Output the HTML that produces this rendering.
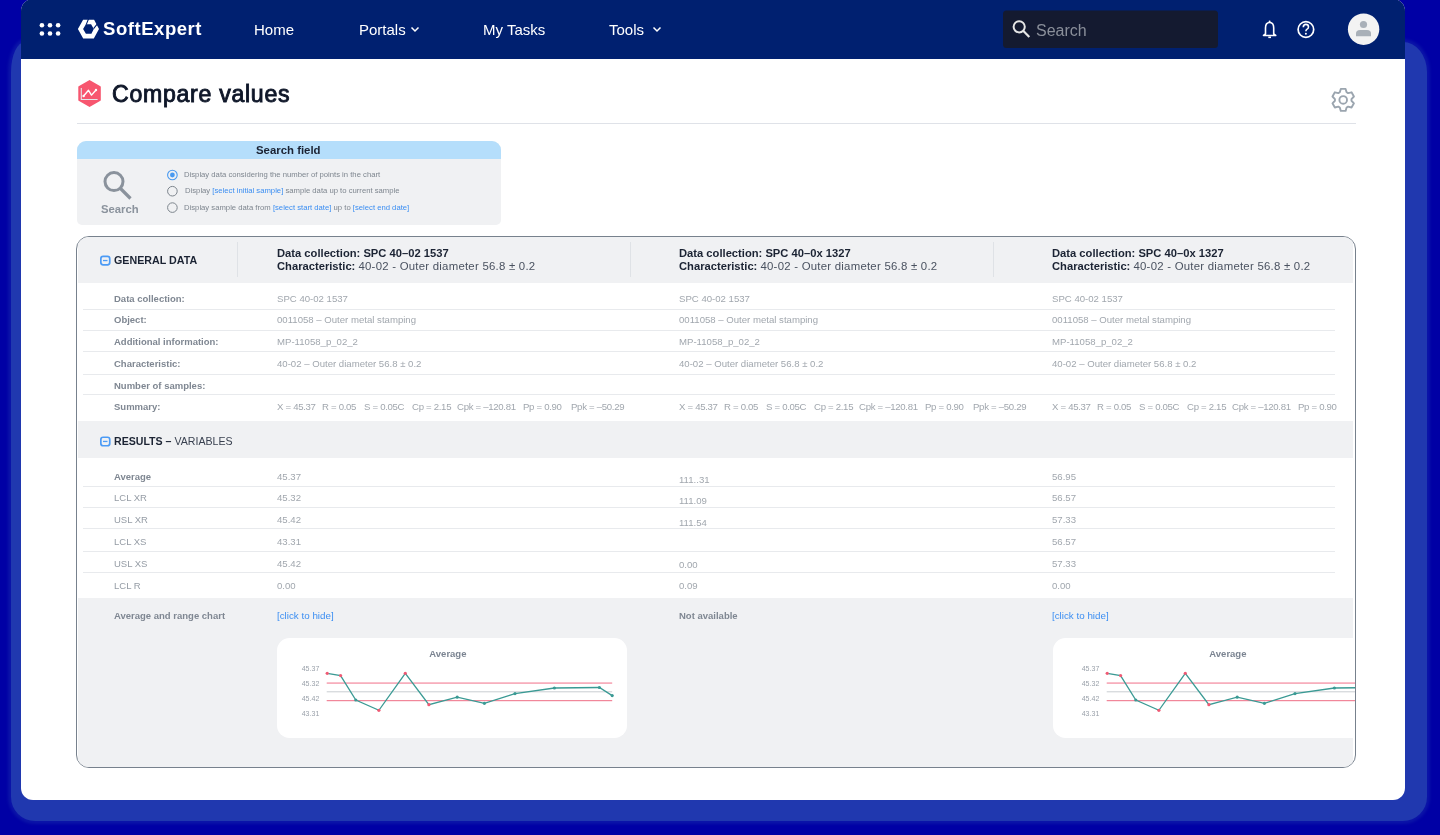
<!DOCTYPE html><html><head><meta charset="utf-8"><style>
*{margin:0;padding:0;box-sizing:border-box;-webkit-font-smoothing:antialiased}
html,body{width:1440px;height:835px;overflow:hidden;background:#0000a5;font-family:"Liberation Sans",sans-serif;position:relative}
.t{will-change:transform}
.abs{position:absolute}
#glow{position:absolute;left:11px;top:42px;width:1416px;height:779px;background:#2038af;border-radius:14px 24px 24px 24px / 30px 30px 24px 24px;box-shadow:0 0 3px 3px rgba(32,56,175,.35)}
#win{position:absolute;left:21px;top:-1px;width:1384px;height:801px;background:#fff;border-radius:12px}
#hdr{position:absolute;left:21px;top:-1px;width:1384px;height:60px;background:#002070;border-radius:12px 12px 0 0}
.t{position:absolute;white-space:nowrap;line-height:1}
.nav{color:#fff;font-size:15px}
.lbl{font-size:9.5px;font-weight:bold;color:#7f8792}
.lbr{font-size:9.5px;color:#959ca5}
.val{font-size:9.6px;color:#a1a7ae}
.sm{font-size:9.6px;color:#a1a7ae;letter-spacing:-0.3px}
.hd{font-size:11.2px;color:#1b2333}
.hd b{font-weight:bold}
.hd span{color:#4a5260;font-size:11.4px;letter-spacing:0.24px}
.link{font-size:9.8px;color:#3b8ef2}
</style></head><body>
<div id="glow"></div><div id="win"></div><div id="hdr"></div>
<svg class="abs" style="left:0;top:0" width="1440" height="60">
  <g fill="#fff">
    <circle cx="41.9" cy="25.25" r="2.3"/><circle cx="50" cy="25.25" r="2.3"/><circle cx="58.1" cy="25.25" r="2.3"/>
    <circle cx="41.9" cy="33.5" r="2.3"/><circle cx="50" cy="33.5" r="2.3"/><circle cx="58.1" cy="33.5" r="2.3"/>
  </g>
  <path fill="#fff" fill-rule="evenodd" d="M77.9 29.1 L83.1 19.7 L94.1 19.7 L99 29.1 L93.8 38.5 L83.2 38.5 Z M83.1 29.1 L85.9 24.2 L91.1 24.2 L93.8 29.1 L91.4 33.8 L85.9 33.8 Z"/>
  <path d="M88.6 18.8 L86.2 24.6 M97.2 24.2 L93.6 28.6" stroke="#002070" stroke-width="1.1"/>
  <path d="M411.5 27.5 L415 31 L418.5 27.5" fill="none" stroke="#fff" stroke-width="1.5"/>
  <path d="M653.5 27.5 L657 31 L660.5 27.5" fill="none" stroke="#fff" stroke-width="1.5"/>
  <rect x="1003" y="10.5" width="215" height="37.5" rx="3.5" fill="#141a30"/>
  <circle cx="1019.2" cy="26.8" r="5.6" fill="none" stroke="#e6e6e6" stroke-width="2"/>
  <path d="M1023.2 30.8 L1029.3 37" stroke="#e6e6e6" stroke-width="2.2"/>
  <path d="M1265.5 34 L1265.5 28 Q1265.5 22.5 1269.6 22.5 Q1273.7 22.5 1273.7 28 L1273.7 34 L1275.7 35.5 L1263.5 35.5 Z" fill="none" stroke="#fff" stroke-width="1.6" stroke-linejoin="round"/>
  <path d="M1268.3 37.3 L1271 37.3" stroke="#fff" stroke-width="1.6"/>
  <circle cx="1269.6" cy="21.5" r="1" fill="#fff"/>
  <circle cx="1305.9" cy="29.5" r="7.8" fill="none" stroke="#fff" stroke-width="1.7"/>
  <path d="M1303.3 27.2 Q1303.3 24.4 1305.9 24.4 Q1308.5 24.4 1308.5 27 Q1308.5 28.6 1306.8 29.4 Q1305.9 29.9 1305.9 31.3" fill="none" stroke="#fff" stroke-width="1.6"/>
  <circle cx="1305.9" cy="33.8" r="1" fill="#fff"/>
  <circle cx="1363.6" cy="29.2" r="15.7" fill="#f3f3f3"/>
  <circle cx="1363.5" cy="24.5" r="3.6" fill="#a9b0b8"/>
  <path d="M1356 36.2 L1356 33.5 Q1356 30 1360 30 L1367 30 Q1371 30 1371 33.5 L1371 36.2 Z" fill="#a9b0b8"/>
</svg>
<div class="t" style="left:103px;top:19.8px;font-size:18.5px;letter-spacing:0.55px;font-weight:bold;color:#fff">SoftExpert</div>
<div class="t nav" style="left:254px;top:22px">Home</div>
<div class="t nav" style="left:359px;top:22px">Portals</div>
<div class="t nav" style="left:483px;top:22px">My Tasks</div>
<div class="t nav" style="left:609px;top:22px">Tools</div>
<div class="t" style="left:1036px;top:22.5px;font-size:16px;color:#8a8f9a">Search</div>
<svg class="abs" style="left:0;top:60px" width="1440" height="80">
  <path d="M89.55 20.85 L100.05 27 L100.05 40 L89.55 46.15 L79.05 40 L79.05 27 Z" fill="#f7566f" stroke="#f7566f" stroke-width="1.5" stroke-linejoin="round"/>
  <path d="M81.3 28 L81.3 39.5 L97.6 39.5" fill="none" stroke="#e3e6ea" stroke-width="1.1"/>
  <path d="M83.6 36 L88.5 30.3 L91.5 35.1 L96 30" fill="none" stroke="#fff" stroke-width="1.4" stroke-linejoin="round"/>
  <circle cx="83.6" cy="36" r="1.2" fill="#fff"/><circle cx="96" cy="30" r="1.2" fill="#fff"/>
  <rect x="77" y="63" width="1279" height="1" fill="#dfe2e8"/>
</svg>
<div class="t" style="left:111.8px;top:82.5px;font-size:23.1px;letter-spacing:0.72px;-webkit-text-stroke:0.9px #0f1729;color:#0f1729">Compare values</div>
<svg class="abs" style="left:0;top:0" width="1440" height="130"><polygon fill="none" stroke="#9ba5af" stroke-width="1.9" stroke-linejoin="round" points="1339.80,92.30 1340.80,88.90 1345.60,88.90 1346.60,92.30 1348.08,93.16 1351.53,92.32 1353.93,96.48 1351.48,99.04 1351.48,100.76 1353.93,103.32 1351.53,107.48 1348.08,106.64 1346.60,107.50 1345.60,110.90 1340.80,110.90 1339.80,107.50 1338.32,106.64 1334.87,107.48 1332.47,103.32 1334.92,100.76 1334.92,99.04 1332.47,96.48 1334.87,92.32 1338.32,93.16"/><circle cx="1343.2" cy="99.9" r="3.8" fill="none" stroke="#9ba5af" stroke-width="1.9"/></svg>
<div class="abs" style="left:77px;top:141px;width:424px;height:84px;background:#f0f1f3;border-radius:9px 9px 5px 5px;overflow:hidden"><div style="height:18px;background:#b5defb"></div></div>
<div class="t" style="left:256px;top:144.5px;font-size:11.4px;font-weight:bold;color:#1b2333">Search field</div>
<svg class="abs" style="left:0;top:140px" width="520" height="90">
  <circle cx="114" cy="41.6" r="9" fill="none" stroke="#8a929c" stroke-width="3"/>
  <path d="M120.5 48.5 L130.5 58.5" stroke="#8a929c" stroke-width="3.2"/>
  <circle cx="172.4" cy="35" r="4.8" fill="none" stroke="#4a9af0" stroke-width="1.1"/>
  <circle cx="172.4" cy="35" r="2.4" fill="#4a9af0"/>
  <circle cx="172.4" cy="51.2" r="4.8" fill="none" stroke="#7c848c" stroke-width="1"/>
  <circle cx="172.4" cy="67.6" r="4.8" fill="none" stroke="#7c848c" stroke-width="1"/>
</svg>
<div class="t" style="left:101px;top:203.8px;font-size:11.3px;font-weight:bold;color:#8b939d">Search</div>
<div class="t" style="left:184px;top:171.3px;font-size:7.7px;color:#7e868f">Display data considering the number of points in the chart</div>
<div class="t" style="left:185px;top:187.3px;font-size:7.7px;color:#7e868f">Display <span style="color:#3b8ef2">[select initial sample]</span> sample data up to current sample</div>
<div class="t" style="left:184px;top:203.5px;font-size:7.7px;color:#7e868f">Display sample data from <span style="color:#3b8ef2">[select start date]</span> up to <span style="color:#3b8ef2">[select end date]</span></div>
<div class="abs" style="left:76.2px;top:236px;width:1279.8px;height:532.2px;border:1.5px solid #77818d;border-radius:13px;background:#fff;overflow:hidden">
<div class="abs" style="left:1.30px;top:-1.50px;width:1274.5px;height:47.5px;background:#f0f1f3;"></div>
<div class="abs" style="left:1.30px;top:183.70px;width:1274.5px;height:37.3px;background:#f0f1f3;"></div>
<div class="abs" style="left:1.30px;top:360.50px;width:1274.5px;height:172px;background:#f0f1f3;"></div>
<div class="abs" style="left:160.30px;top:4.50px;width:1px;height:35px;background:#dfe2e6;"></div>
<div class="abs" style="left:553.30px;top:4.50px;width:1px;height:35px;background:#dfe2e6;"></div>
<div class="abs" style="left:916.30px;top:4.50px;width:1px;height:35px;background:#dfe2e6;"></div>
<div class="abs" style="left:6.30px;top:71.50px;width:1252px;height:1px;background:#e8eaed;"></div>
<div class="abs" style="left:6.30px;top:93.00px;width:1252px;height:1px;background:#e8eaed;"></div>
<div class="abs" style="left:6.30px;top:114.00px;width:1252px;height:1px;background:#e8eaed;"></div>
<div class="abs" style="left:6.30px;top:136.50px;width:1252px;height:1px;background:#e8eaed;"></div>
<div class="abs" style="left:6.30px;top:157.00px;width:1252px;height:1px;background:#e8eaed;"></div>
<div class="abs" style="left:6.30px;top:249.00px;width:1252px;height:1px;background:#e8eaed;"></div>
<div class="abs" style="left:6.30px;top:270.00px;width:1252px;height:1px;background:#e8eaed;"></div>
<div class="abs" style="left:6.30px;top:291.00px;width:1252px;height:1px;background:#e8eaed;"></div>
<div class="abs" style="left:6.30px;top:313.50px;width:1252px;height:1px;background:#e8eaed;"></div>
<div class="abs" style="left:6.30px;top:334.50px;width:1252px;height:1px;background:#e8eaed;"></div>
<svg class="abs" style="left:-77.70px;top:-237.50px" width="200" height="500"><rect x="100.85" y="256.35" width="8.9" height="8.5" rx="2.3" fill="none" stroke="#4c9bf5" stroke-width="1.7"/><rect x="103" y="259.90" width="4.5" height="1.3" fill="#4c9bf5"/></svg>
<svg class="abs" style="left:-77.70px;top:-237.50px" width="200" height="500"><rect x="100.85" y="437.25" width="8.9" height="8.5" rx="2.3" fill="none" stroke="#4c9bf5" stroke-width="1.7"/><rect x="103" y="440.80" width="4.5" height="1.3" fill="#4c9bf5"/></svg>
<div class="t " style="left:37.10px;top:17.50px;font-size:10.7px;font-weight:bold;color:#1b2333">GENERAL DATA</div>
<div class="t " style="left:37.10px;top:198.50px;font-size:10.6px;color:#1b2333"><b>RESULTS –</b> <span style="color:#394150">VARIABLES</span></div>
<div class="t hd" style="left:199.80px;top:10.50px;"><b>Data collection: SPC 40–02 1537</b></div>
<div class="t hd" style="left:199.80px;top:24.00px;"><b>Characteristic:</b> <span>40-02 - Outer diameter 56.8 ± 0.2</span></div>
<div class="t hd" style="left:601.80px;top:10.50px;"><b>Data collection: SPC 40–0x 1327</b></div>
<div class="t hd" style="left:601.80px;top:24.00px;"><b>Characteristic:</b> <span>40-02 - Outer diameter 56.8 ± 0.2</span></div>
<div class="t hd" style="left:974.80px;top:10.50px;"><b>Data collection: SPC 40–0x 1327</b></div>
<div class="t hd" style="left:974.80px;top:24.00px;"><b>Characteristic:</b> <span>40-02 - Outer diameter 56.8 ± 0.2</span></div>
<div class="t lbl" style="left:37.30px;top:56.50px;">Data collection:</div>
<div class="t val" style="left:199.80px;top:56.50px;">SPC 40-02 1537</div>
<div class="t val" style="left:601.80px;top:56.50px;">SPC 40-02 1537</div>
<div class="t val" style="left:974.80px;top:56.50px;">SPC 40-02 1537</div>
<div class="t lbl" style="left:37.30px;top:78.25px;">Object:</div>
<div class="t val" style="left:199.80px;top:78.25px;">0011058 – Outer metal stamping</div>
<div class="t val" style="left:601.80px;top:78.25px;">0011058 – Outer metal stamping</div>
<div class="t val" style="left:974.80px;top:78.25px;">0011058 – Outer metal stamping</div>
<div class="t lbl" style="left:37.30px;top:100.00px;">Additional information:</div>
<div class="t val" style="left:199.80px;top:100.00px;">MP-11058_p_02_2</div>
<div class="t val" style="left:601.80px;top:100.00px;">MP-11058_p_02_2</div>
<div class="t val" style="left:974.80px;top:100.00px;">MP-11058_p_02_2</div>
<div class="t lbl" style="left:37.30px;top:121.75px;">Characteristic:</div>
<div class="t val" style="left:199.80px;top:121.75px;">40-02 – Outer diameter 56.8 ± 0.2</div>
<div class="t val" style="left:601.80px;top:121.75px;">40-02 – Outer diameter 56.8 ± 0.2</div>
<div class="t val" style="left:974.80px;top:121.75px;">40-02 – Outer diameter 56.8 ± 0.2</div>
<div class="t lbl" style="left:37.30px;top:143.50px;">Number of samples:</div>
<div class="t val" style="left:199.80px;top:143.50px;"></div>
<div class="t val" style="left:601.80px;top:143.50px;"></div>
<div class="t val" style="left:974.80px;top:143.50px;"></div>
<div class="t lbl" style="left:37.30px;top:165.25px;">Summary:</div>
<div class="t sm" style="left:200.00px;top:165.25px;">X = 45.37</div>
<div class="t sm" style="left:245.00px;top:165.25px;">R = 0.05</div>
<div class="t sm" style="left:286.90px;top:165.25px;">S = 0.05C</div>
<div class="t sm" style="left:334.50px;top:165.25px;">Cp = 2.15</div>
<div class="t sm" style="left:379.40px;top:165.25px;">Cpk = –120.81</div>
<div class="t sm" style="left:446.30px;top:165.25px;">Pp = 0.90</div>
<div class="t sm" style="left:494.30px;top:165.25px;">Ppk = –50.29</div>
<div class="t sm" style="left:602.00px;top:165.25px;">X = 45.37</div>
<div class="t sm" style="left:647.00px;top:165.25px;">R = 0.05</div>
<div class="t sm" style="left:688.90px;top:165.25px;">S = 0.05C</div>
<div class="t sm" style="left:736.50px;top:165.25px;">Cp = 2.15</div>
<div class="t sm" style="left:781.40px;top:165.25px;">Cpk = –120.81</div>
<div class="t sm" style="left:848.30px;top:165.25px;">Pp = 0.90</div>
<div class="t sm" style="left:896.30px;top:165.25px;">Ppk = –50.29</div>
<div class="t sm" style="left:975.00px;top:165.25px;">X = 45.37</div>
<div class="t sm" style="left:1020.00px;top:165.25px;">R = 0.05</div>
<div class="t sm" style="left:1061.90px;top:165.25px;">S = 0.05C</div>
<div class="t sm" style="left:1109.50px;top:165.25px;">Cp = 2.15</div>
<div class="t sm" style="left:1154.40px;top:165.25px;">Cpk = –120.81</div>
<div class="t sm" style="left:1221.30px;top:165.25px;">Pp = 0.90</div>
<div class="t lbl" style="left:37.30px;top:234.50px;">Average</div>
<div class="t val" style="left:199.80px;top:234.50px;">45.37</div>
<div class="t val" style="left:601.80px;top:238.20px;">111..31</div>
<div class="t val" style="left:974.80px;top:234.50px;">56.95</div>
<div class="t lbr" style="left:37.30px;top:256.30px;">LCL XR</div>
<div class="t val" style="left:199.80px;top:256.30px;">45.32</div>
<div class="t val" style="left:601.80px;top:259.40px;">111.09</div>
<div class="t val" style="left:974.80px;top:256.30px;">56.57</div>
<div class="t lbr" style="left:37.30px;top:278.10px;">USL XR</div>
<div class="t val" style="left:199.80px;top:278.10px;">45.42</div>
<div class="t val" style="left:601.80px;top:280.60px;">111.54</div>
<div class="t val" style="left:974.80px;top:278.10px;">57.33</div>
<div class="t lbr" style="left:37.30px;top:299.90px;">LCL XS</div>
<div class="t val" style="left:199.80px;top:299.90px;">43.31</div>
<div class="t val" style="left:601.80px;top:301.80px;"></div>
<div class="t val" style="left:974.80px;top:299.90px;">56.57</div>
<div class="t lbr" style="left:37.30px;top:321.70px;">USL XS</div>
<div class="t val" style="left:199.80px;top:321.70px;">45.42</div>
<div class="t val" style="left:601.80px;top:323.00px;">0.00</div>
<div class="t val" style="left:974.80px;top:321.70px;">57.33</div>
<div class="t lbr" style="left:37.30px;top:343.50px;">LCL R</div>
<div class="t val" style="left:199.80px;top:343.50px;">0.00</div>
<div class="t val" style="left:601.80px;top:344.20px;">0.09</div>
<div class="t val" style="left:974.80px;top:343.50px;">0.00</div>
<div class="t lbl" style="left:37.30px;top:373.50px;">Average and range chart</div>
<div class="t link" style="left:200.30px;top:373.50px;">[click to hide]</div>
<div class="t lbl" style="left:601.80px;top:373.50px;">Not available</div>
<div class="t link" style="left:975.30px;top:373.50px;">[click to hide]</div>
<div class="abs" style="left:200.30px;top:400.50px;width:350px;height:100px;background:#fff;border-radius:12.5px"></div>
<svg class="abs" style="left:-77.70px;top:-237.50px" width="1440" height="835"><text x="447.9" y="656.7" text-anchor="middle" font-family="Liberation Sans" font-size="9.5" font-weight="bold" fill="#7b8491">Average</text><text x="301.7" y="670.8" font-family="Liberation Sans" font-size="7.05" fill="#9aa1aa">45.37</text><text x="301.7" y="685.8" font-family="Liberation Sans" font-size="7.05" fill="#9aa1aa">45.32</text><text x="301.7" y="701.0999999999999" font-family="Liberation Sans" font-size="7.05" fill="#9aa1aa">45.42</text><text x="301.7" y="716.0999999999999" font-family="Liberation Sans" font-size="7.05" fill="#9aa1aa">43.31</text><rect x="326.7" y="682.3" width="285.5" height="1.6" fill="#f7a6b5"/><rect x="326.7" y="691.3" width="285.5" height="1" fill="#c9cdd2"/><rect x="326.7" y="700.1" width="285.5" height="1.1" fill="#f07a90"/><polyline fill="none" stroke="#3a9a94" stroke-width="1.3" points="327.2,673.3 340.6,675.6 355.8,700 378.9,710.3 405.3,673.3 428.9,704.7 457.2,697.2 484.4,703.3 515,693.6 554.4,688 599.4,687.5 612.2,695.6"/><circle cx="327.2" cy="673.3" r="1.6" fill="#f05a74"/><circle cx="340.6" cy="675.6" r="1.6" fill="#f05a74"/><circle cx="355.8" cy="700" r="1.6" fill="#3a9a94"/><circle cx="378.9" cy="710.3" r="1.6" fill="#f05a74"/><circle cx="405.3" cy="673.3" r="1.6" fill="#f05a74"/><circle cx="428.9" cy="704.7" r="1.6" fill="#f05a74"/><circle cx="457.2" cy="697.2" r="1.6" fill="#3a9a94"/><circle cx="484.4" cy="703.3" r="1.6" fill="#3a9a94"/><circle cx="515" cy="693.6" r="1.6" fill="#3a9a94"/><circle cx="554.4" cy="688" r="1.6" fill="#3a9a94"/><circle cx="599.4" cy="687.5" r="1.6" fill="#3a9a94"/><circle cx="612.2" cy="695.6" r="1.6" fill="#3a9a94"/></svg>
<div class="abs" style="left:976.30px;top:400.50px;width:350px;height:100px;background:#fff;border-radius:12.5px"></div>
<svg class="abs" style="left:-77.70px;top:-237.50px" width="1440" height="835"><text x="1227.9" y="656.7" text-anchor="middle" font-family="Liberation Sans" font-size="9.5" font-weight="bold" fill="#7b8491">Average</text><text x="1081.7" y="670.8" font-family="Liberation Sans" font-size="7.05" fill="#9aa1aa">45.37</text><text x="1081.7" y="685.8" font-family="Liberation Sans" font-size="7.05" fill="#9aa1aa">45.32</text><text x="1081.7" y="701.0999999999999" font-family="Liberation Sans" font-size="7.05" fill="#9aa1aa">45.42</text><text x="1081.7" y="716.0999999999999" font-family="Liberation Sans" font-size="7.05" fill="#9aa1aa">43.31</text><rect x="1106.7" y="682.3" width="285.5" height="1.6" fill="#f7a6b5"/><rect x="1106.7" y="691.3" width="285.5" height="1" fill="#c9cdd2"/><rect x="1106.7" y="700.1" width="285.5" height="1.1" fill="#f07a90"/><polyline fill="none" stroke="#3a9a94" stroke-width="1.3" points="1107.2,673.3 1120.6,675.6 1135.8,700 1158.9,710.3 1185.3,673.3 1208.9,704.7 1237.2,697.2 1264.4,703.3 1295,693.6 1334.4,688 1379.4,687.5 1392.2,695.6"/><circle cx="1107.2" cy="673.3" r="1.6" fill="#f05a74"/><circle cx="1120.6" cy="675.6" r="1.6" fill="#f05a74"/><circle cx="1135.8" cy="700" r="1.6" fill="#3a9a94"/><circle cx="1158.9" cy="710.3" r="1.6" fill="#f05a74"/><circle cx="1185.3" cy="673.3" r="1.6" fill="#f05a74"/><circle cx="1208.9" cy="704.7" r="1.6" fill="#f05a74"/><circle cx="1237.2" cy="697.2" r="1.6" fill="#3a9a94"/><circle cx="1264.4" cy="703.3" r="1.6" fill="#3a9a94"/><circle cx="1295" cy="693.6" r="1.6" fill="#3a9a94"/><circle cx="1334.4" cy="688" r="1.6" fill="#3a9a94"/><circle cx="1379.4" cy="687.5" r="1.6" fill="#3a9a94"/><circle cx="1392.2" cy="695.6" r="1.6" fill="#3a9a94"/></svg>
</div>
</body></html>
